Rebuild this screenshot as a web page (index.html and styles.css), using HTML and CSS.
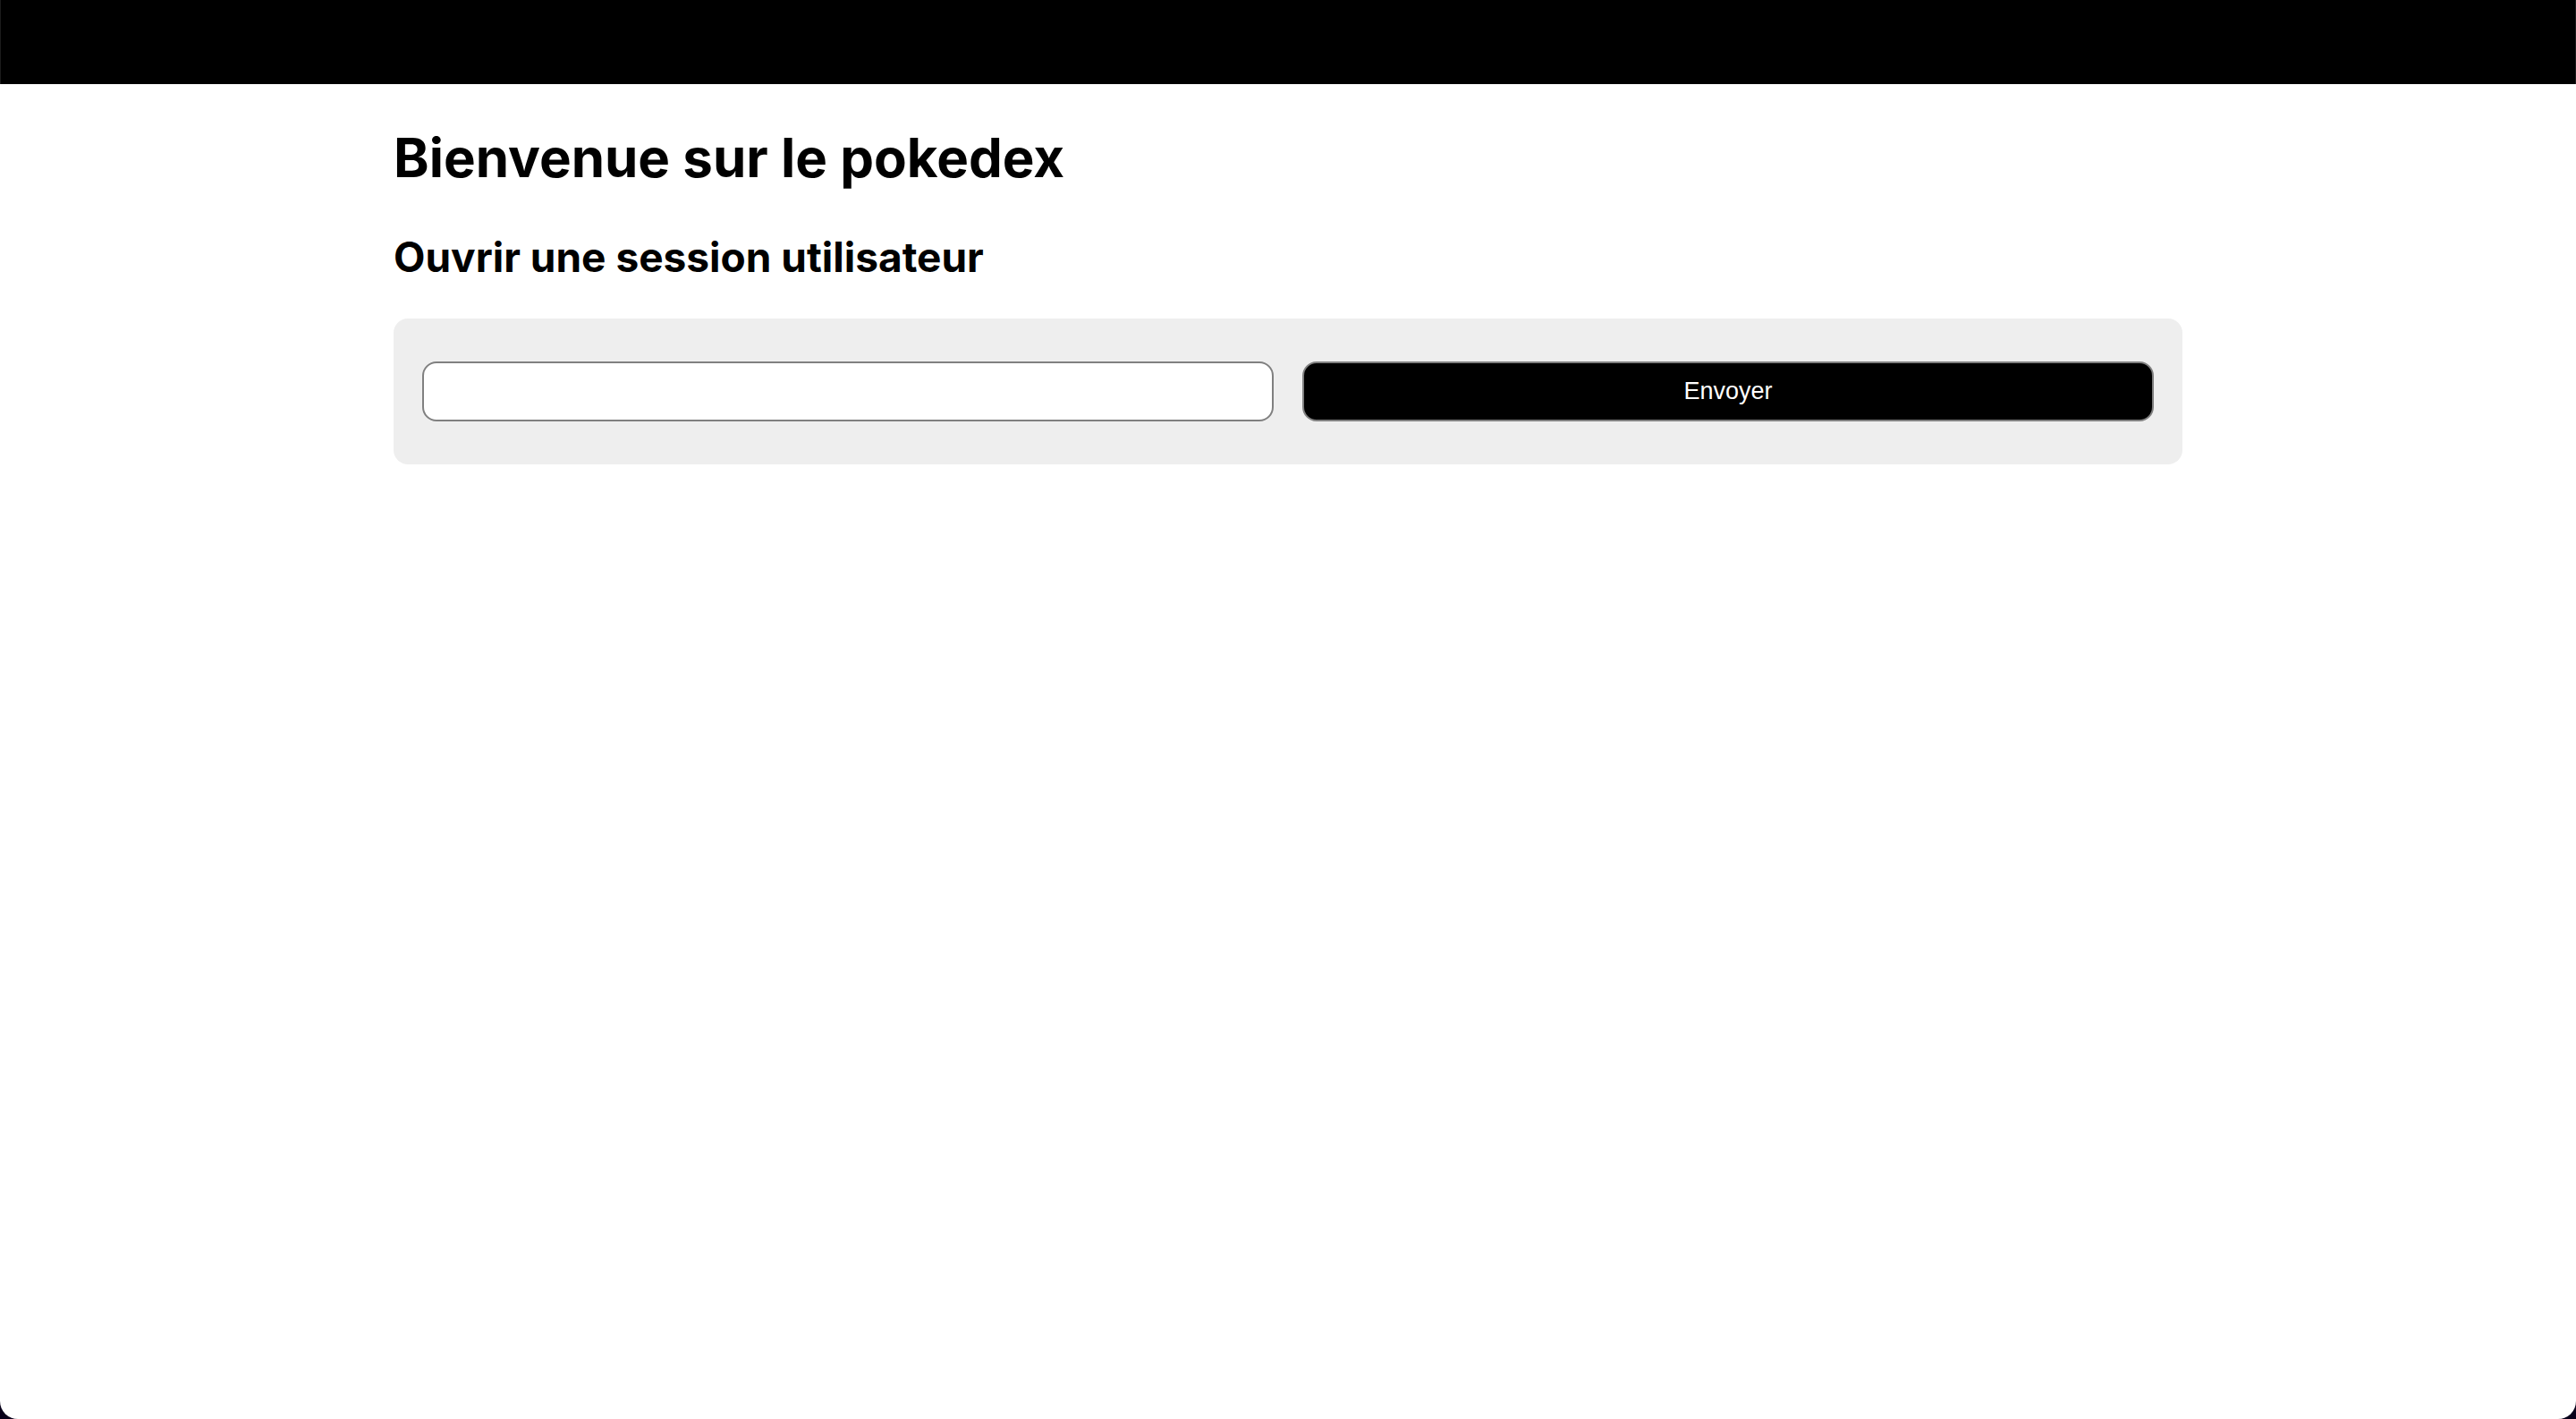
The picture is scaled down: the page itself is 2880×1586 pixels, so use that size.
FILE: index.html
```html
<!DOCTYPE html>
<html lang="fr">
<head>
<meta charset="utf-8">
<meta name="viewport" content="width=device-width, initial-scale=1">
<title>Pokedex</title>
<link rel="stylesheet" href="styles.css">
</head>
<body>
<header class="topbar"></header>
<main class="content">
  <h1 class="title">Bienvenue sur le pokedex</h1>
  <h2 class="subtitle">Ouvrir une session utilisateur</h2>
  <form class="panel">
    <input class="field" type="text" name="username" aria-label="Nom d'utilisateur">
    <button class="field submit" type="submit">Envoyer</button>
  </form>
</main>
</body>
</html>
```

FILE: styles.css
```css
* {
  box-sizing: border-box;
}

html {
  background: #08001a;
}

body {
  min-height: 100vh;
  margin: 0;
  border-radius: 0 0 20px 20px;
  background: #fff;
  color: #000;
  font-family: Inter, "Liberation Sans", sans-serif;
}

.topbar {
  height: 94px;
  border: solid #1c1c1c;
  border-width: 0 1px;
  background: #000;
}

.content {
  max-width: 2000px;
  margin: 0 auto;
  padding-top: 44px;
}

.title,
.subtitle {
  margin: 0;
  font-weight: 700;
}

.title {
  font-size: 60px;
  line-height: 76px;
}

.subtitle {
  margin-top: 44px;
  font-size: 46px;
  line-height: 58px;
}

.panel {
  display: grid;
  grid-template-columns: 1fr 1fr;
  gap: 32px;
  margin-top: 40px;
  padding: 48px 32px;
  border-radius: 16px;
  background: #eee;
}

.field {
  width: 100%;
  height: 67px;
  padding: 16px;
  border: 2px solid #808080;
  border-radius: 16px;
  background: #fff;
  font-family: "Liberation Sans", Arial, sans-serif;
  font-size: 27px;
  line-height: 31px;
}

.submit {
  background: #000;
  color: #fff;
  cursor: pointer;
}
```
